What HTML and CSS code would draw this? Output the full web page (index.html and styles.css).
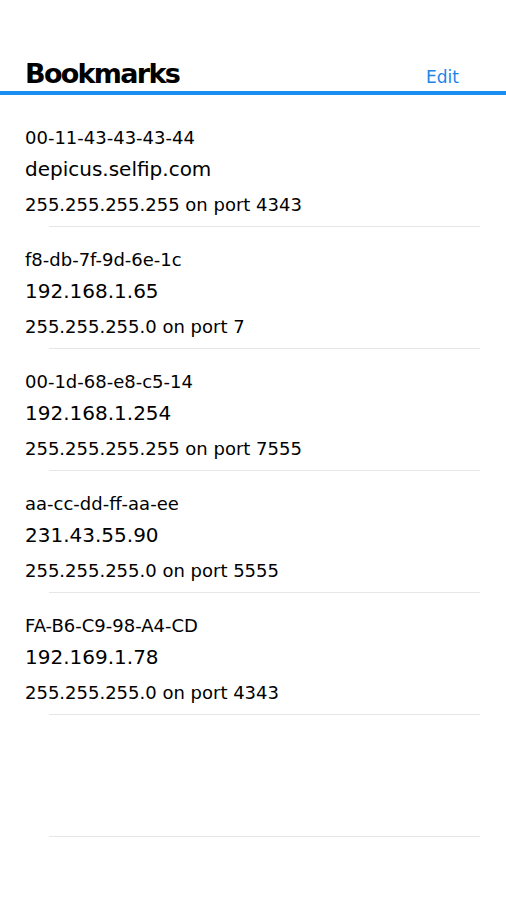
FILE: index.html
```html
<!DOCTYPE html>
<html lang="en">
<head>
  <meta charset="UTF-8">
  <meta name="viewport" content="width=device-width, initial-scale=1.0">
  <title>Bookmarks</title>
  <link rel="stylesheet" href="styles.css">
</head>
<body>
  <!-- Header -->
  <div class="top-bar">
    <h1>Bookmarks</h1>
    <a class="edit-link" href="#">Edit</a>
  </div>

  <!-- Bookmark list -->
  <ul class="bookmark-list">
    <li class="bookmark">
      <div class="bookmark-text">
        <div class="mac">00-11-43-43-43-44</div>
        <div class="host">depicus.selfip.com</div>
        <div class="subnet">255.255.255.255 on port 4343</div>
      </div>
    </li>
    <li class="bookmark">
      <div class="bookmark-text">
        <div class="mac">f8-db-7f-9d-6e-1c</div>
        <div class="host">192.168.1.65</div>
        <div class="subnet">255.255.255.0 on port 7</div>
      </div>
    </li>
    <li class="bookmark">
      <div class="bookmark-text">
        <div class="mac">00-1d-68-e8-c5-14</div>
        <div class="host">192.168.1.254</div>
        <div class="subnet">255.255.255.255 on port 7555</div>
      </div>
    </li>
    <li class="bookmark">
      <div class="bookmark-text">
        <div class="mac">aa-cc-dd-ff-aa-ee</div>
        <div class="host">231.43.55.90</div>
        <div class="subnet">255.255.255.0 on port 5555</div>
      </div>
    </li>
    <li class="bookmark">
      <div class="bookmark-text">
        <div class="mac">FA-B6-C9-98-A4-CD</div>
        <div class="host">192.169.1.78</div>
        <div class="subnet">255.255.255.0 on port 4343</div>
      </div>
    </li>
    <!-- empty row -->
    <li class="bookmark bookmark-empty"></li>
  </ul>
</body>
</html>
```

FILE: styles.css
```css
/* Reset default styles */
* {
  margin: 0;
  padding: 0;
  box-sizing: border-box;
  font-family: "DejaVu Sans", Verdana, sans-serif;
}

body {
  background: #fff;
  color: #000;
  width: 506px;
}

/* Header */
.top-bar {
  display: flex;
  justify-content: space-between;
  align-items: baseline;
  padding: 58px 47px 2px 25px;
  border-bottom: 4px solid #1a8ef0;
}

.top-bar h1 {
  font-size: 27px;
  line-height: 31px;
  font-weight: bold;
  letter-spacing: -1.7px;
}

.edit-link {
  font-size: 17px;
  color: #1d85e6;
  text-decoration: none;
}

/* List */
.bookmark-list {
  list-style: none;
  padding-top: 10px;
}

.bookmark {
  margin: 0 26px 0 49px;
  border-bottom: 1px solid #e6e6e6;
}

.bookmark-text {
  margin-left: -24px;
  padding: 19px 0 6px 0;
}

.mac {
  font-size: 18px;
  line-height: 28px;
}

.host {
  font-size: 20px;
  line-height: 34px;
}

.subnet {
  font-size: 18px;
  line-height: 30px;
  margin-top: 4px;
}

.bookmark-empty {
  height: 122px;
}
```
